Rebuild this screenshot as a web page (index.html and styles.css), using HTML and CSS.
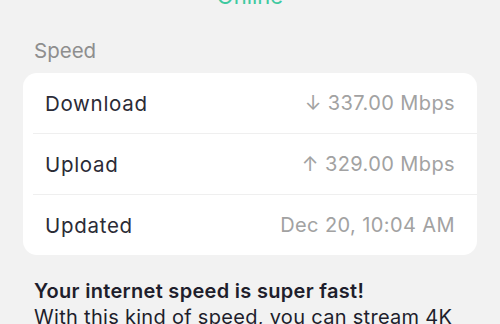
FILE: index.html
```html
<!DOCTYPE html>
<html>
<head>
<meta charset="utf-8">
<link rel="stylesheet" href="styles.css">
</head>
<body>
<div class="status">Online</div>
<section class="speed">
  <div class="label">Speed</div>
  <div class="card">
    <div class="row"><span class="name">Download</span><span class="value">↓ 337.00 Mbps</span></div>
    <div class="row"><span class="name">Upload</span><span class="value">↑ 329.00 Mbps</span></div>
    <div class="row"><span class="name">Updated</span><span class="value">Dec 20, 10:04 AM</span></div>
  </div>
</section>
<div class="note">
  <div class="note-title">Your internet speed is super fast!</div>
  <div class="note-body">With this kind of speed, you can stream 4K videos on multiple devices.</div>
</div>
</body>
</html>
```

FILE: styles.css
```css
html, body {
  margin: 0;
  padding: 0;
  background: #f2f2f2;
  font-family: Inter, "Noto Sans", sans-serif;
  overflow: hidden;
}
.status {
  text-align: center;
  color: #3ec9a0;
  font-size: 22px;
  line-height: 24px;
  margin-top: -16px;
}
.speed {
  padding: 0 23px;
}
.label {
  color: #8e8e8e;
  font-size: 20.5px;
  line-height: 26px;
  padding-left: 11px;
  margin-top: 30px;
  margin-bottom: 9px;
}
.card {
  background: #ffffff;
  border-radius: 14px;
  overflow: hidden;
}
.row {
  display: flex;
  justify-content: space-between;
  align-items: center;
  height: 60px;
  padding: 0 22px;
}
.row + .row {
  border-top: 1px solid #efefef;
  margin-left: 10px;
  padding-left: 12px;
}
.name {
  color: #2b2b36;
  font-size: 20.5px;
  letter-spacing: 0.7px;
}
.value {
  color: #a2a2a2;
  font-size: 20px;
  letter-spacing: 0.4px;
}
.note {
  padding: 0 34px;
  margin-top: 23px;
  color: #1e1e2c;
  font-size: 20px;
  line-height: 26px;
  letter-spacing: 0.3px;
}
.note-title {
  font-weight: 600;
}
```
